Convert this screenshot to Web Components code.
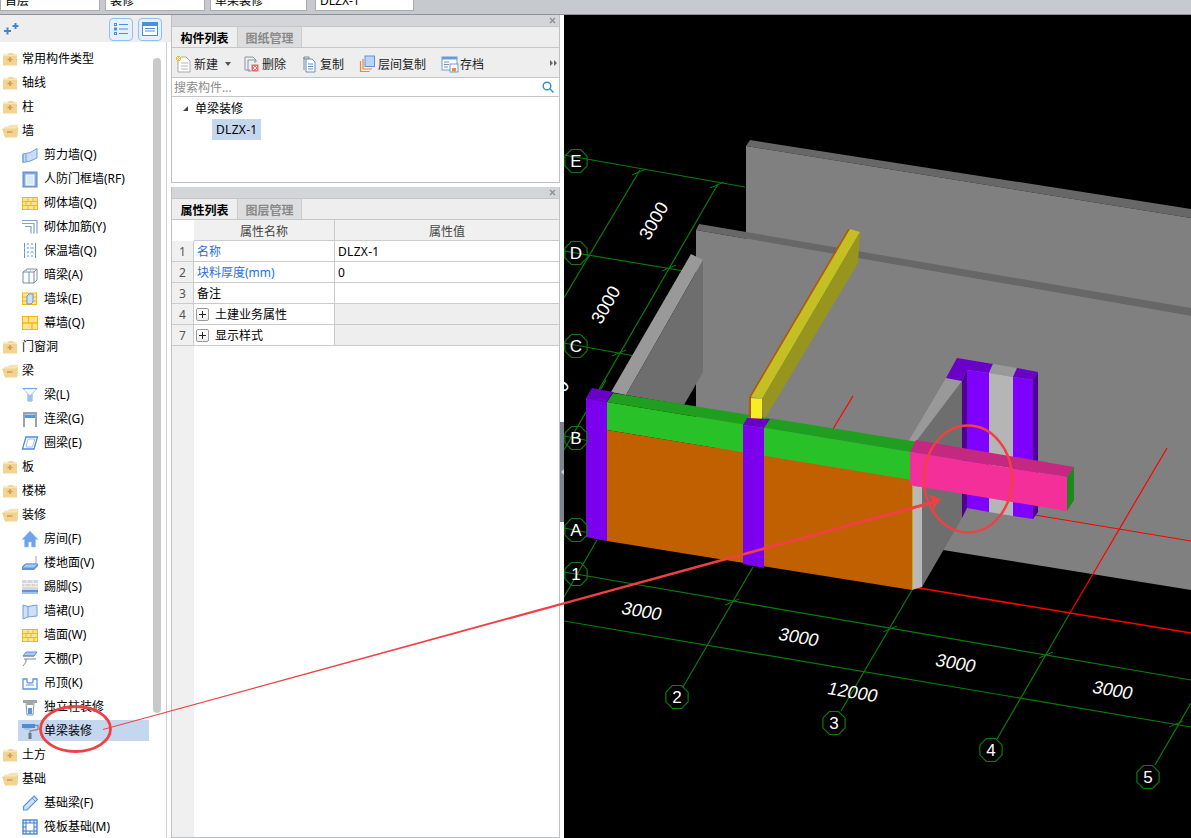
<!DOCTYPE html>
<html>
<head>
<meta charset="utf-8">
<title>单梁装修</title>
<style>
html, body { margin: 0; height: 100%; overflow: hidden; background: #fff; }
body { font: 12px "Noto Sans", "Noto Sans CJK SC", sans-serif; color: #000; }
</style>
</head>
<body>
<app-shell>
  <top-bar slot="top">
    <top-select style="width:100px">首层</top-select>
    <top-select style="width:100px">装修</top-select>
    <top-select style="width:97px">单梁装修</top-select>
    <top-select style="width:99px;margin-left:3px">DLZX-1</top-select>
  </top-bar>

  <side-tree slot="side">
    <tree-row icon="closed">常用构件类型</tree-row>
    <tree-row icon="closed">轴线</tree-row>
    <tree-row icon="closed">柱</tree-row>
    <tree-row icon="open">墙</tree-row>
    <tree-row child icon="shear">剪力墙(Q)</tree-row>
    <tree-row child icon="frame">人防门框墙(RF)</tree-row>
    <tree-row child icon="brick">砌体墙(Q)</tree-row>
    <tree-row child icon="rebar">砌体加筋(Y)</tree-row>
    <tree-row child icon="insul">保温墙(Q)</tree-row>
    <tree-row child icon="hidden">暗梁(A)</tree-row>
    <tree-row child icon="pier">墙垛(E)</tree-row>
    <tree-row child icon="curtain">幕墙(Q)</tree-row>
    <tree-row icon="closed">门窗洞</tree-row>
    <tree-row icon="open">梁</tree-row>
    <tree-row child icon="beam">梁(L)</tree-row>
    <tree-row child icon="link">连梁(G)</tree-row>
    <tree-row child icon="ring">圈梁(E)</tree-row>
    <tree-row icon="closed">板</tree-row>
    <tree-row icon="closed">楼梯</tree-row>
    <tree-row icon="open">装修</tree-row>
    <tree-row child icon="house">房间(F)</tree-row>
    <tree-row child icon="floor">楼地面(V)</tree-row>
    <tree-row child icon="skirt">踢脚(S)</tree-row>
    <tree-row child icon="dado">墙裙(U)</tree-row>
    <tree-row child icon="brick">墙面(W)</tree-row>
    <tree-row child icon="ceiling">天棚(P)</tree-row>
    <tree-row child icon="hang">吊顶(K)</tree-row>
    <tree-row child icon="column">独立柱装修</tree-row>
    <tree-row child selected icon="roller">单梁装修</tree-row>
    <tree-row icon="closed">土方</tree-row>
    <tree-row icon="open">基础</tree-row>
    <tree-row child icon="pencil">基础梁(F)</tree-row>
    <tree-row child icon="raft">筏板基础(M)</tree-row>
  </side-tree>

  <div slot="middle" style="display:flex;flex-direction:column;height:100%;gap:4px">
    <dock-panel style="height:168px" active="构件列表" other="图纸管理">
      <tool-strip>
        <tool-btn icon="new" style="margin-left:3px">新建</tool-btn>
        <span style="width:0;height:0;border:3px solid transparent;border-top:4px solid #555;border-bottom:0;margin:1px 12px 0 7px"></span>
        <tool-btn icon="del">删除</tool-btn>
        <tool-btn icon="copy" style="margin-left:15px">复制</tool-btn>
        <tool-btn icon="floorcopy" style="margin-left:15px">层间复制</tool-btn>
        <tool-btn icon="save" style="margin-left:15px">存档</tool-btn>
      </tool-strip>
      <search-box>搜索构件...</search-box>
      <part-list>
        <span slot="group">单梁装修</span>
        <span slot="item">DLZX-1</span>
      </part-list>
    </dock-panel>
    <dock-panel style="flex:1" active="属性列表" other="图层管理">
      <prop-table></prop-table>
    </dock-panel>
  </div>

  <model-view slot="view"></model-view>
</app-shell>
<mark-up></mark-up>

<script>
const ICONS = {
  closed: '<path d="M1 4.500h5l1-1.500h4l1 1.500h3v11H1z" fill="#f2d391"/><path d="M1 5.500h14" stroke="#f8e6bd"/><path d="M5.500 9.500h5M8 7v5" stroke="#c99f4e" stroke-width="1.500"/>',
  open: '<path d="M2 5l5-1 1-1 8-.5V14H3z" fill="#f7e2b4"/><path d="M0 6.500h13l3-1-1 10H3z" fill="#f2d391"/><path d="M5 10h5.500" stroke="#c99f4e" stroke-width="1.500"/>',
  shear: '<path d="M2 8q7 0 14-5.500V12q-7 4-14 4.500z" fill="#c9dcf4" stroke="#6f9fdc"/><path d="M2 8v8.500M5 8v8" stroke="#6f9fdc"/>',
  frame: '<rect x="2" y="2" width="14" height="15" fill="#7fa9e4" stroke="#5a8ad0"/><rect x="5" y="5" width="8" height="10" fill="#dbe8f8" stroke="#fff"/>',
  brick: '<rect x="1.500" y="3.500" width="15" height="12" fill="#fde49a" stroke="#fbb800"/><path d="M2 7.500h14M2 11.500h14M7 4v3.500M12 4v3.500M5 7.500v4M10 7.500v4M7 11.500v4M13 11.500v4" stroke="#fbb800"/>',
  rebar: '<path d="M1 2.500h15v13M1 5.500h12v10M4 8.500h6v7" fill="none" stroke="#7ea2c9" stroke-width="1.200"/>',
  insul: '<path d="M3.500 1v15M14.500 1v15" stroke="#5b95e0"/><path d="M7 1v15M11 1v15" stroke="#5b95e0" stroke-dasharray="2 2"/><path d="M3 6h12M3 11h12" stroke="#9cc0ee" stroke-dasharray="1 2"/>',
  hidden: '<path d="M2 6l4-3h10v11l-3 3H2z" fill="#fff" stroke="#7f8c9c"/><path d="M2 6h11v11M13 6l3-3" fill="none" stroke="#7f8c9c"/><path d="M8 6v11" stroke="#5b95e0"/><path d="M6 3l-1 3M10 3l-1 3" stroke="#b5c1cf"/>',
  pier: '<rect x="1.500" y="3" width="14" height="11.500" fill="#fde49a" stroke="#fbb800"/><path d="M2 7h14M2 11h14" stroke="#fbb800"/><path d="M6 6l2-2h4v8l-2 2H6z" fill="#cfe0f6" stroke="#5b95e0"/>',
  curtain: '<rect x="1.500" y="2.500" width="15" height="13" fill="#fde49a" stroke="#fbb800"/><path d="M2 9h14M7.500 3v6M11 9v6" stroke="#fbb800" stroke-width="1.300"/>',
  beam: '<path d="M2 2.500h14l-5 5V15H7V7.500z" fill="#dbe8f8" stroke="#6fa5e4"/><path d="M3 3.500h12L9 9z" fill="#f7fafe"/><path d="M7 9v6h4V9" fill="#9dc2ee"/>',
  link: '<path d="M3 17V3h12v14" fill="none" stroke="#97a3ad" stroke-width="2"/><path d="M3 3h12" stroke="#97a3ad" stroke-width="2"/><rect x="4" y="4.500" width="10" height="3.500" fill="#5b95e0"/>',
  ring: '<path d="M5 3h11.500L13 15H1.500z" fill="#fff" stroke="#4f8ad8" stroke-width="1.300"/><path d="M7 5h7l-2.500 8H5z" fill="none" stroke="#9cc0ee"/>',
  house: '<path d="M9 1L1 9.500h2.500V17h4v-5h3v5h4V9.500H17z" fill="#6ea2ea" stroke="#9fc3f2" stroke-width=".6"/>',
  floor: '<path d="M1 13l3-3h11v-8" fill="none" stroke="#97a3ad"/><path d="M5 10h12l-4 4H1z" fill="#a9c9f0" stroke="#5b95e0"/><path d="M1 14h12v2H1zM13 14l4-4v2l-4 4z" fill="#5b95e0"/>',
  skirt: '<rect x="1" y="2" width="16" height="10" fill="#d4d5d6"/><path d="M1 5.500h16M1 8.800h16M6 2v3.500M12 2v3.500M4 5.500v3.300M10 5.500v3.300M15 5.500v3.300" stroke="#f1f1f1"/><rect x="1" y="12" width="16" height="2" fill="#5b95e0"/><rect x="1" y="14" width="16" height="2" fill="#9dc2ee"/>',
  dado: '<path d="M2 3l5 1.500L16 3v11l-9 1-5 2z" fill="#cfe0f6" stroke="#6f9fdc"/><path d="M7 4.500V15" stroke="#6f9fdc"/>',
  ceiling: '<path d="M5 2h11l-3 4H2z" fill="#a9c9f0" stroke="#5b95e0"/><path d="M2 6h11M3 9h12M5 9v3l-3 4" fill="none" stroke="#7a8894"/>',
  hang: '<path d="M2 5h4v3c0 1 3 1 3 1s3 0 3-1V5h4v10H2z" fill="#fff" stroke="#5b95e0" stroke-width="1.300"/><path d="M5 11h8" stroke="#5b95e0"/>',
  column: '<path d="M2 2h14v3H2z" fill="#9ba6ae"/><path d="M5 5l1 12h6l1-12" fill="#fff" stroke="#8a95a0"/><path d="M7 10h4v6H7z" fill="#5b95e0"/><path d="M6 5h6v2H6z" fill="#9ba6ae"/>',
  roller: '<path d="M1 2h13v4H1z" fill="#4f8ad8"/><path d="M14 3.500h3v4L9 9v2" fill="none" stroke="#7f8c9c" stroke-width="1.300"/><path d="M3 6h8l-3 2H4z" fill="#9dc2ee"/><rect x="7.500" y="11" width="3" height="6" fill="#6b7782"/>',
  pencil: '<path d="M13 2l3.500 3.500L6 16H2.500v-3.500z" fill="#cfe0f6" stroke="#5b95e0" stroke-width="1.200"/><path d="M11 4l3.500 3.500" stroke="#5b95e0"/>',
  raft: '<rect x="2" y="2" width="14" height="14" fill="#e8f0fa" stroke="#3f7fd0" stroke-width="1.300"/><rect x="5" y="5" width="8" height="8" fill="#fff" stroke="#3f7fd0"/><path d="M2 5h3M2 9h3M2 13h3M13 5h3M13 9h3M13 13h3M5 2v3M9 2v3M13 2v3M5 13v3M9 13v3M13 13v3" stroke="#3f7fd0"/>',
  new: '<path d="M3 2h8l4 4v11H3z" fill="#fff" stroke="#a9a9a9"/><path d="M6 8h7M6 11h7M6 14h7" stroke="#b5b5b5"/><rect x="1" y="1" width="5" height="5" fill="#f4b63c"/><path d="M1 1l5 5M6 1l-5 5" stroke="#fff"/>',
  del: '<path d="M2 2h8l3 3v2M2 2v13h5" fill="none" stroke="#8c98a4"/><path d="M5 5h7v3M5 5v11h3" fill="none" stroke="#8c98a4"/><rect x="8.500" y="9.500" width="7" height="7" fill="#e56a6a"/><path d="M10 11l4 4M14 11l-4 4" stroke="#fff"/>',
  copy: '<path d="M3 2h5v2H3zM3 2v13" fill="none" stroke="#7f8c9c"/><path d="M5 4h6l3 3v10H5z" fill="#fff" stroke="#5b8ec8"/><path d="M7 9h5M7 11.500h5M7 14h5" stroke="#5b8ec8"/>',
  floorcopy: '<path d="M1.500 6v10.500h9M4 4v10h9" fill="none" stroke="#e88a3c" stroke-width="1.200"/><rect x="6" y="1" width="9.500" height="10.500" fill="#b9d4f4" stroke="#5b95e0"/>',
  save: '<rect x="1" y="2" width="15" height="13" fill="#fff" stroke="#6a9bd8"/><rect x="1" y="2" width="15" height="2.500" fill="#6a9bd8"/><path d="M3 7h5M3 9.500h5M3 12h4" stroke="#7f8c9c"/><rect x="9" y="9" width="8" height="8" fill="#fff" stroke="#6a9bd8"/><rect x="11" y="13" width="4" height="3.500" fill="#f08a2c"/>'
};

class AppIcon extends HTMLElement {
    constructor() {
        super();
        this.attachShadow({ mode: 'open' });
    }
    connectedCallback() {
        this.shadowRoot.innerHTML = `
            <style>
                :host { display: block; width: 18px; height: 18px; flex: none; }
                svg { display: block; }
            </style>
            <svg width="18" height="18" viewBox="0 0 18 18">${ICONS[this.getAttribute('name')] || ''}</svg>
        `;
    }
}

class AppShell extends HTMLElement {
    constructor() {
        super();
        this.attachShadow({ mode: 'open' });
        this.shadowRoot.innerHTML = `
            <style>
                :host {
                    display: grid;
                    grid-template-columns: 171px 389px 4px 1fr;
                    grid-template-rows: 15px 823px;
                    height: 838px;
                }
                .top { grid-column: 1 / -1; }
                .split { background: #fff; display: flex; align-items: center; }
                .grip {
                    width: 4px; height: 100px; margin-top: 91px;
                    background: #7d868e; display: flex; align-items: center; justify-content: center;
                }
                .grip i { width: 0; height: 0; border: 3px solid transparent; border-right: 3px solid #c8ccd0; border-left: 0; }
                .mid { background: #fff; min-height: 0; }
                .view { min-width: 0; overflow: hidden; background: #000; }
            </style>
            <div class="top"><slot name="top"></slot></div>
            <slot name="side"></slot>
            <div class="mid"><slot name="middle"></slot></div>
            <div class="split"><div class="grip"><i></i></div></div>
            <div class="view"><slot name="view"></slot></div>
        `;
    }
}

class TopBar extends HTMLElement {
    constructor() {
        super();
        this.attachShadow({ mode: 'open' });
        this.shadowRoot.innerHTML = `
            <style>
                :host {
                    box-sizing: border-box;
                    display: flex;
                    align-items: flex-end;
                    gap: 5px;
                    height: 15px;
                    padding: 0 0 3px 0;
                    overflow: hidden;
                    background: #c6c9cd;
                    border-bottom: 1px solid #8f9296;
                }
            </style>
            <slot></slot>
        `;
    }
}

class TopSelect extends HTMLElement {
    constructor() {
        super();
        this.attachShadow({ mode: 'open' });
        this.shadowRoot.innerHTML = `
            <style>
                :host {
                    box-sizing: border-box;
                    display: flex;
                    flex: none;
                    align-items: center;
                    height: 22px;
                    padding: 2px 4px 0;
                    background: #fff;
                    border: 1px solid #ababab;
                    font-size: 12px;
                    line-height: 14px;
                }
                .t { flex: 1; }
                i { width: 0; height: 0; border: 3px solid transparent; border-top: 3px solid #444; border-bottom: 0; margin-top: -13px; }
            </style>
            <span class="t"><slot></slot></span><i></i>
        `;
    }
}

class SideTree extends HTMLElement {
    constructor() {
        super();
        this.attachShadow({ mode: 'open' });
        this.shadowRoot.innerHTML = `
            <style>
                :host {
                    display: flex;
                    flex-direction: column;
                    position: relative;
                    overflow: hidden;
                    min-height: 0;
                    background: #fff;
                }
                .head {
                    flex: none; height: 27px; background: #eeeeee;
                    display: flex; align-items: center; padding: 0 9px 0 4px; gap: 5px; box-sizing: border-box;
                }
                .spark { margin-right: auto; }
                .mode {
                    box-sizing: border-box; width: 24px; height: 23px; margin-top: 1px;
                    border: 1px solid #90c0f0; border-radius: 4px; background: #e6f0fb;
                    display: flex; align-items: center; justify-content: center;
                }
                .body { flex: 1; padding-top: 4px; padding-right: 5px; min-height: 0; overflow: hidden; }
                .bar {
                    position: absolute; left: 153px; top: 43px; width: 8px; height: 655px;
                    background: #c9c9c9; border-radius: 4px;
                }
                .rule { position: absolute; left: 166px; top: 27px; bottom: 0; width: 1px; background: #cfcfcf; }
            </style>
            <div class="head">
                <svg class="spark" width="18" height="14" viewBox="0 0 18 14">
                    <path d="M3.500 5.500v7M0 9h7" stroke="#3f86d8" stroke-width="2"/>
                    <path d="M11.500 1v6M8.500 4h6" stroke="#3f86d8" stroke-width="2"/>
                </svg>
                <div class="mode">
                    <svg width="14" height="14" viewBox="0 0 14 14" fill="none" stroke="#4a90d9">
                        <rect x=".5" y="1.500" width="2" height="2"/><rect x=".5" y="6" width="2" height="2"/><rect x=".5" y="10.500" width="2" height="2"/>
                        <path d="M5 2.500h9M5 7h9M5 11.500h9"/>
                    </svg>
                </div>
                <div class="mode">
                    <svg width="16" height="14" viewBox="0 0 16 14">
                        <rect x=".5" y=".5" width="15" height="13" fill="#fff" stroke="#4a90d9"/>
                        <rect x="1" y="1" width="14" height="3" fill="#4a90d9"/>
                        <path d="M3 6.500h10M3 9h10" stroke="#4a90d9"/>
                    </svg>
                </div>
            </div>
            <div class="body"><slot></slot></div>
            <div class="bar"></div>
            <div class="rule"></div>
        `;
    }
}

class TreeRow extends HTMLElement {
    constructor() {
        super();
        this.attachShadow({ mode: 'open' });
    }
    connectedCallback() {
        this.shadowRoot.innerHTML = `
            <style>
                :host { display: block; box-sizing: border-box; height: 24px; padding-top: 2px; white-space: nowrap; }
                .row { display: flex; align-items: center; height: 21px; padding-left: 2px; gap: 2px; }
                .row span { margin-top: -2px; }
                :host([child]) .row { margin-left: 18px; width: 131px; padding-left: 3px; gap: 5px; box-sizing: border-box; }
                :host([selected]) .row { background: #c5d7ee; }
            </style>
            <div class="row"><app-icon name="${this.getAttribute('icon')}"></app-icon><span><slot></slot></span></div>
        `;
    }
}

class DockPanel extends HTMLElement {
    constructor() {
        super();
        this.attachShadow({ mode: 'open' });
    }
    connectedCallback() {
        this.shadowRoot.innerHTML = `
            <style>
                :host {
                    box-sizing: border-box;
                    display: flex;
                    flex-direction: column;
                    min-height: 0;
                    border: 1px solid #bfc1c4;
                    border-top: 0;
                    background: #fff;
                }
                .title {
                    box-sizing: border-box;
                    flex: none; height: 12px; background: #d3d5d9; border-bottom: 1px solid #c4c6ca;
                    display: flex; align-items: center; justify-content: flex-end; padding-right: 3px;
                }
                .tabs {
                    box-sizing: border-box;
                    flex: none; display: flex; height: 21px; background: #eeeeee;
                    border-bottom: 1px solid #c4c6c9; font-weight: 700; line-height: 23px;
                }
                .tabs span { box-sizing: border-box; width: 65px; text-align: center; }
                .tabs .off { background: #dcdddf; color: #8a8a8a; border-left: 1px solid #c9cbce; border-right: 1px solid #c9cbce; }
                .body { flex: 1; display: flex; flex-direction: column; min-height: 0; }
            </style>
            <div class="title">
                <svg width="7" height="7" viewBox="0 0 7 7"><path d="M1 1l5 5M6 1l-5 5" stroke="#8b8e92" stroke-width="1.300"/></svg>
            </div>
            <div class="tabs"><span>${this.getAttribute('active')}</span><span class="off">${this.getAttribute('other')}</span></div>
            <div class="body"><slot></slot></div>
        `;
    }
}

class ToolStrip extends HTMLElement {
    constructor() {
        super();
        this.attachShadow({ mode: 'open' });
        this.shadowRoot.innerHTML = `
            <style>
                :host {
                    box-sizing: border-box; flex: none; display: flex; align-items: center;
                    height: 30px; padding-top: 2px; background: #eeeeee; border-bottom: 1px solid #c4c6c9; position: relative;
                }
                .more { position: absolute; right: 2px; top: 12px; }
            </style>
            <slot></slot>
            <svg class="more" width="7" height="6" viewBox="0 0 7 6"><path d="M0 0l3 3-3 3zM4 0l3 3-3 3z" fill="#666"/></svg>
        `;
    }
}

class ToolBtn extends HTMLElement {
    constructor() {
        super();
        this.attachShadow({ mode: 'open' });
    }
    connectedCallback() {
        this.shadowRoot.innerHTML = `
            <style>
                :host { display: flex; align-items: center; gap: 1px; white-space: nowrap; color: #222; }
            </style>
            <app-icon name="${this.getAttribute('icon')}"></app-icon><span><slot></slot></span>
        `;
    }
}

class SearchBox extends HTMLElement {
    constructor() {
        super();
        this.attachShadow({ mode: 'open' });
        this.shadowRoot.innerHTML = `
            <style>
                :host {
                    box-sizing: border-box; flex: none; display: flex; align-items: center; justify-content: space-between;
                    height: 19px; padding: 0 5px 0 2px; border-bottom: 1px solid #c4c6c9; color: #8c8c8c; background: #fff;
                }
            </style>
            <span><slot></slot></span>
            <svg width="12" height="12" viewBox="0 0 12 12" fill="none" stroke="#2f8fd0" stroke-width="1.400"><circle cx="5" cy="5" r="3.800"/><path d="M8 8l3.500 3.500"/></svg>
        `;
    }
}

class PartList extends HTMLElement {
    constructor() {
        super();
        this.attachShadow({ mode: 'open' });
        this.shadowRoot.innerHTML = `
            <style>
                :host { display: block; flex: 1; background: #fff; }
                .group { display: flex; align-items: center; height: 22px; padding-left: 11px; gap: 7px; }
                .group i { width: 0; height: 0; border-left: 5px solid transparent; border-bottom: 5px solid #444; }
                .item { display: inline-block; height: 21px; line-height: 21px; margin-left: 40px; padding: 0 4px; background: #c5d7ee; letter-spacing: .3px; }
            </style>
            <div class="group"><i></i><slot name="group"></slot></div>
            <div class="item"><slot name="item"></slot></div>
        `;
    }
}

class PropTable extends HTMLElement {
    constructor() {
        super();
        this.attachShadow({ mode: 'open' });
        const rows = [
            ['1', '名称', 'DLZX-1', 'link'],
            ['2', '块料厚度(mm)', '0', 'link'],
            ['3', '备注', '', ''],
            ['4', '土建业务属性', '', 'more'],
            ['7', '显示样式', '', 'more']
        ];
        const cells = rows.map(([n, name, value, kind]) => `
            <div class="c num">${n}</div>
            <div class="c name ${kind}">${kind === 'more' ? '<b class="plus"></b>' : ''}<span>${name}</span></div>
            <div class="c val ${kind === 'more' ? 'shade' : ''}">${value}</div>
        `).join('');
        this.shadowRoot.innerHTML = `
            <style>
                :host { display: flex; flex-direction: column; flex: 1; min-height: 0; background: #fff; }
                .grid { display: grid; grid-template-columns: 22px 141px 1fr; grid-auto-rows: 21px; }
                .c {
                    box-sizing: border-box; display: flex; align-items: center; padding-left: 3px;
                    border-right: 1px solid #c9cbce; border-bottom: 1px solid #c9cbce; white-space: nowrap;
                }
                .val { border-right: 0; letter-spacing: .3px; }
                .h { justify-content: center; background: #f0f0f0; color: #444; padding: 2px 0 0; letter-spacing: 0; }
                .corner { border: 0; background: #fff; }
                .num { justify-content: center; padding: 0; background: #f0f0f0; color: #555; }
                .link { color: #2a6ee0; }
                .shade { background: #eeeeee; }
                .more { padding-left: 2px; }
                .plus {
                    box-sizing: border-box; position: relative; width: 13px; height: 13px; margin-right: 6px;
                    border: 1px solid #9a9a9a; border-radius: 2px; background: linear-gradient(#fff, #eee);
                }
                .plus::before { content: ""; position: absolute; left: 2px; top: 5px; width: 7px; height: 1px; background: #222; }
                .plus::after { content: ""; position: absolute; left: 5px; top: 2px; width: 1px; height: 7px; background: #222; }
                .rest { flex: 1; width: 22px; background: #f0f0f0; }
            </style>
            <div class="grid">
                <div class="c corner"></div>
                <div class="c h">属性名称</div>
                <div class="c h val">属性值</div>
                ${cells}
            </div>
            <div class="rest"></div>
        `;
    }
}

function poly(points, fill) {
    return `<polygon points="${points}" fill="${fill}"/>`;
}
function line(x1, y1, x2, y2, color, w) {
    return `<line x1="${x1}" y1="${y1}" x2="${x2}" y2="${y2}" stroke="${color}" stroke-width="${w || 1.200}"/>`;
}
function bubble(cx, cy, label) {
    let pts = [];
    for (let i = 0; i < 8; i++) {
        const a = Math.PI / 8 + i * Math.PI / 4;
        pts.push((cx + 12 * Math.cos(a)).toFixed(1) + ',' + (cy + 12.500 * Math.sin(a)).toFixed(1));
    }
    return `<polygon points="${pts.join(' ')}" fill="none" stroke="#0a7d0a" stroke-width="1.200"/>
        <text x="${cx}" y="${cy + 6}" text-anchor="middle" class="b">${label}</text>`;
}
function dim(x, y, angle, label, skew) {
    return `<text transform="translate(${x} ${y}) rotate(${angle}) skewX(${skew || 0})" text-anchor="middle" class="d">${label}</text>`;
}
function tick(x, y) {
    return line(x - 7, y + 3, x + 7, y - 3, '#0a7d0a', 1);
}

class ModelView extends HTMLElement {
    constructor() {
        super();
        this.attachShadow({ mode: 'open' });
        const G = '#0a7d0a', R = '#ff0000';
        const grid = [
            line(564, 155, 745, 187, G), line(564, 251, 690, 272, G), line(564, 343, 640, 357, G),
            line(564, 436, 590, 441, G), line(564, 528, 590, 533, G),
            line(640, 170, 564, 298, G), line(718, 184, 564, 450, G), line(606, 380, 590, 408, G),
            line(597, 540, 564, 597, G), line(564, 572, 1191, 680, G), line(564, 621, 1191, 727, G),
            line(753, 567, 683, 687, G), line(912, 590, 841, 711, G), line(1070, 613, 997, 739, G),
            line(1191, 703, 1155, 765, G),
            tick(639, 172), tick(717, 185), tick(669, 268), tick(619, 353),
            tick(732, 602), tick(890, 629), tick(1046, 655), tick(1176, 724)
        ].join('');
        const walls = [
            poly('746,146 750,140 1191,209 1191,218', '#676767'),
            poly('746,146 1191,218 1191,320 746,240', '#808080'),
            poly('699,224 1191,308 1191,316 696,230', '#676767'),
            poly('696,230 1191,316 1191,590 943,550 930,530 696,440', '#808080'),
            poly('691,254 703,260 626,395 611,392', '#999999'),
            poly('703,260 703,372 684,405 626,395', '#6e6e6e'),
            line(853, 396, 833, 429, R), line(1167, 448, 1070, 613, R), line(1035, 515, 1191, 541, R),
            line(913, 587, 1191, 633, R, 1.500),
            poly('908,442 946,378 962,381 915,443', '#999999'),
            poly('962,381 962,518 922,587 922,487 915,443', '#6e6e6e')
        ].join('');
        const rightCols = [
            poly('946,378 957,358 993,364 989,373 967,370 962,381', '#6a00c8'),
            poly('962,381 967,370 967,508 962,518', '#50008f'),
            poly('967,370 989,373 989,512 967,508', '#7f00ff'),
            poly('993,364 1017,368 1013,377 989,373', '#999999'),
            poly('989,373 1013,377 1013,516 989,512', '#b5b5b5'),
            poly('1017,368 1038,372 1033,380 1013,377', '#6a00c8'),
            poly('1013,377 1033,380 1033,519 1013,516', '#7f00ff'),
            poly('1033,380 1038,372 1038,512 1033,519', '#50008f')
        ].join('');
        const front = [
            poly('613,393 918,442 910,452 607,402', '#1f9e1f'),
            poly('607,402 910,452 910,480 607,430', '#28c228'),
            poly('607,430 912,480 912,590 607,541', '#c06000'),
            poly('912,486 922,487 922,587 912,590', '#b8b8b8'),
            line(912.500, 484, 912.500, 590, '#c9a818', 1),
            poly('848,229 851,229 751.500,397 751.500,420 749,420 749,397', '#b05a08'),
            poly('850,229 860,232 762,399 751,397', '#c4c024'),
            poly('860,232 858,263 764,420 762,399', '#97951e'),
            poly('751,398 762,399 762,421 751,420', '#f5ef22'),
            poly('586,398 592,388 613,392 607,402', '#6a00c8'),
            poly('586,398 607,402 607,541 586,537', '#7b00ee'),
            poly('743,425 747,418 770,419 764,428', '#6a00c8'),
            poly('743,425 764,428 764,568 743,564', '#7b00ee'),
            poly('916,440 1074,467 1067,477 910,452', '#c42880'),
            poly('910,452 1067,477 1067,511 910,485', '#f52f9a'),
            poly('1067,477 1074,467 1074,500 1067,511', '#1a8a1a')
        ].join('');
        const labels = [
            bubble(576, 161, 'E'), bubble(576, 253, 'D'), bubble(576, 346, 'C'), bubble(576, 438, 'B'),
            bubble(576, 530, 'A'), bubble(576, 574, '1'), bubble(677, 697, '2'), bubble(834, 723, '3'),
            bubble(991, 750, '4'), bubble(1148, 777, '5'),
            dim(659, 224, -60, '3000'), dim(611, 308, -60, '3000'), dim(560, 402, -60, '3000'),
            dim(640, 617, 10, '3000', -8), dim(797, 643, 10, '3000', -8), dim(954, 669, 10, '3000', -8),
            dim(1111, 696, 10, '3000', -8), dim(851, 698, 10, '12000', -8)
        ].join('');
        this.shadowRoot.innerHTML = `
            <style>
                :host { display: block; height: 100%; background: #000; }
                svg { display: block; }
                text { fill: #fff; font-family: "Liberation Sans", sans-serif; }
                .b { font-size: 17px; }
                .d { font-size: 18px; }
            </style>
            <svg width="627" height="823" viewBox="564 15 627 823">${grid}${walls}${rightCols}${front}${labels}</svg>
        `;
    }
}

class MarkUp extends HTMLElement {
    constructor() {
        super();
        this.attachShadow({ mode: 'open' });
        this.shadowRoot.innerHTML = `
            <style>
                :host { position: absolute; left: 0; top: 0; width: 1191px; height: 838px; pointer-events: none; }
                svg { display: block; }
            </style>
            <svg width="1191" height="838" viewBox="0 0 1191 838" fill="none" stroke="#f04044">
                <ellipse cx="968" cy="479" rx="44" ry="53.500" stroke-width="2.500"/>
                <ellipse cx="75.500" cy="729" rx="35" ry="22.500" stroke-width="2.800"/>
                <polygon points="103,729 932,501 929,494 941,499 933,510 932.500,504 103,730" fill="#f04044" stroke="none"/>
            </svg>
        `;
    }
}

customElements.define('app-icon', AppIcon);
customElements.define('app-shell', AppShell);
customElements.define('top-bar', TopBar);
customElements.define('top-select', TopSelect);
customElements.define('side-tree', SideTree);
customElements.define('tree-row', TreeRow);
customElements.define('dock-panel', DockPanel);
customElements.define('tool-strip', ToolStrip);
customElements.define('tool-btn', ToolBtn);
customElements.define('search-box', SearchBox);
customElements.define('part-list', PartList);
customElements.define('prop-table', PropTable);
customElements.define('model-view', ModelView);
customElements.define('mark-up', MarkUp);
</script>
</body>
</html>
